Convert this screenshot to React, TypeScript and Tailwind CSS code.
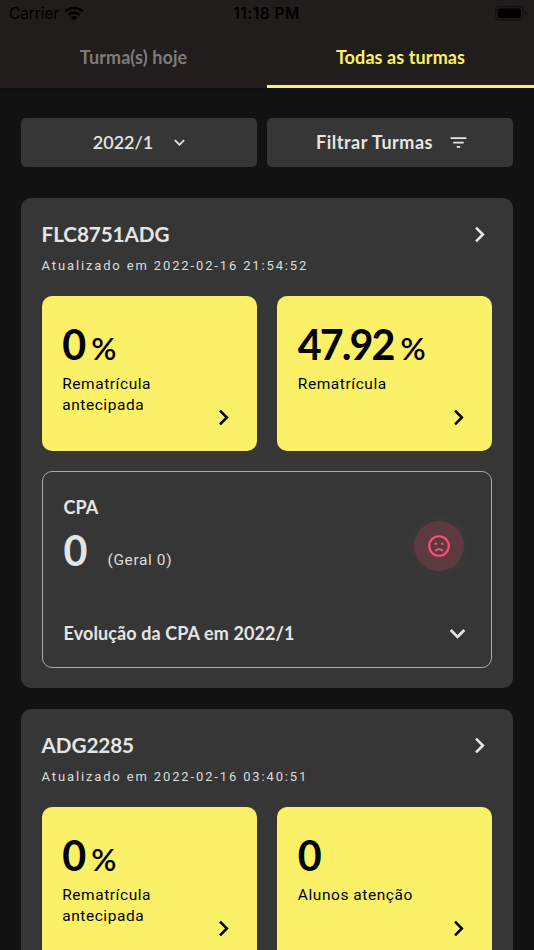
import React from "react";

const lato = "font-['Lato',sans-serif]";
const roboto = "font-['Roboto',sans-serif]";

type IconProps = { className?: string };

function ChevronRight({ className = "" }: IconProps) {
  return (
    <svg viewBox="0 0 24 24" fill="currentColor" className={`size-[31px] shrink-0 ${className}`}>
      <path d="M8.59 16.58 13.17 12 8.59 7.41 10 6l6 6-6 6-1.41-1.42Z" />
    </svg>
  );
}

function ChevronDown({ className = "" }: IconProps) {
  return (
    <svg viewBox="0 0 24 24" fill="currentColor" className={`shrink-0 ${className}`}>
      <path d="M7.41 8.58 12 13.17l4.59-4.59L18 10l-6 6-6-6 1.41-1.42Z" />
    </svg>
  );
}

function FilterIcon({ className = "" }: IconProps) {
  return (
    <svg viewBox="0 0 24 24" fill="currentColor" className={`shrink-0 ${className}`}>
      <path d="M10 18h4v-2h-4v2ZM3 6v2h18V6H3Zm3 7h12v-2H6v2Z" />
    </svg>
  );
}

function SadFace() {
  return (
    <svg viewBox="0 0 24 24" fill="currentColor" className="size-[26px]">
      <circle cx="12" cy="12" r="9" fill="none" stroke="currentColor" strokeWidth="2" />
      <circle cx="9" cy="10" r="1.15" />
      <circle cx="15" cy="10" r="1.15" />
      <path d="M12 14c1.75 0 3.29.72 4.19 1.81l-1.42 1.42C14.32 16.5 13.25 16 12 16s-2.32.5-2.77 1.23l-1.42-1.42C8.71 14.72 10.25 14 12 14Z" />
    </svg>
  );
}

function StatusBar() {
  return (
    <div className="grid h-7 grid-cols-3 items-center pl-[9px] pr-[7px] font-['Inter',sans-serif] text-[15.5px] text-black">
      <div className="flex items-center gap-[5px]">
        <span className="tracking-[-0.1px]">Carrier</span>
        <svg viewBox="0 0 20 15" className="-mt-[2px] h-[15px] w-5" fill="none" stroke="black" strokeWidth="2.7">
          <path d="M1.2 5.6a12.6 12.6 0 0 1 17.6 0" />
          <path d="M4.4 8.9a8 8 0 0 1 11.2 0" />
          <path d="M10 14.6 6.9 11.4a4.4 4.4 0 0 1 6.2 0Z" fill="black" stroke="none" />
        </svg>
      </div>
      <span className="-ml-[3px] text-center font-semibold tracking-[0.45px]">11:18 PM</span>
      <svg viewBox="0 0 32 15" className="-mt-[1.5px] h-[15px] w-8 justify-self-end">
        <rect x="0.6" y="0.6" width="27.8" height="13.3" rx="4" fill="none" stroke="#141110" strokeWidth="1.1" />
        <rect x="2.6" y="2.5" width="23.4" height="9.6" rx="2" fill="black" />
        <path d="M30 5v4.6c1-.4 1.7-1.2 1.7-2.3S31 5.4 30 5Z" fill="#141110" />
      </svg>
    </div>
  );
}

function Metric({ value, percent, label }: { value: string; percent?: boolean; label: string }) {
  return (
    <div className="flex h-[155px] flex-1 flex-col rounded-[10px] bg-[#fbf168] pl-[20.6px] pr-[18px] pt-[23px] text-black">
      <div className={`flex h-[50px] items-baseline gap-[7px] font-bold leading-[50px] ${lato}`}>
        <span className="text-[41.3px] tracking-[-2px]">{value}</span>
        {percent && <span className="text-[31px] font-semibold">%</span>}
      </div>
      <div className={`mt-[5px] h-[42px] w-[120px] text-[15.5px] leading-[20.7px] tracking-[0.55px] ${roboto}`}>
        {label}
      </div>
      <ChevronRight className="-mt-[14px] self-end" />
    </div>
  );
}

function CardHeader({ code, updated }: { code: string; updated: string }) {
  return (
    <div className="flex h-[77px] items-start justify-between">
      <div>
        <h2 className={`text-[20.7px] font-bold leading-[31px] tracking-[-0.1px] ${lato}`}>{code}</h2>
        <p className={`mt-[5.5px] text-[13px] leading-5 tracking-[1.86px] text-[#dcdcdc] ${roboto}`}>
          Atualizado em {updated}
        </p>
      </div>
      <ChevronRight className="-mr-[2.5px]" />
    </div>
  );
}

export default function App() {
  return (
    <div className={`flex h-[950px] w-[534px] flex-col overflow-hidden bg-[#121212] text-[#e5e5e5] ${lato}`}>
      <header className="h-[88px] shrink-0 bg-[#211d1c] shadow-[0_1px_4px_rgba(0,0,0,0.35)]">
        <StatusBar />
        <nav className="grid h-[60px] grid-cols-2 text-center text-[18px] font-bold leading-[58px] tracking-[0.1px]">
          <div className="h-[60px] text-[#7e7c7b]">Turma(s) hoje</div>
          <div className="h-[60px] border-b-[3px] border-[#fbf168] text-[#fbf168]">Todas as turmas</div>
        </nav>
      </header>

      <main className="flex flex-col px-[21px] pt-[30px]">
        <div className="flex gap-[10px] text-[18px] font-bold">
          <button className="flex h-[48.5px] w-[236px] items-center justify-center gap-[16px] rounded-[5px] bg-[#363636] pl-[5px]">
            <span className="font-semibold">2022/1</span>
            <ChevronDown className="size-[21px]" />
          </button>
          <button className="flex h-[48.5px] flex-1 items-center justify-center gap-[15px] rounded-[5px] bg-[#363636] pl-[5px]">
            <span className="tracking-[0.5px]">Filtrar Turmas</span>
            <FilterIcon className="size-[21px]" />
          </button>
        </div>

        <section className="mt-[31.5px] h-[490px] shrink-0 rounded-[10px] bg-[#363636] px-[20.6px] pt-[21px]">
          <CardHeader code="FLC8751ADG" updated="2022-02-16 21:54:52" />
          <div className="flex gap-[20.5px]">
            <Metric value="0" percent label="Rematrícula antecipada" />
            <Metric value="47.92" percent label="Rematrícula" />
          </div>
          <div className="mt-[20px] h-[197px] rounded-[10px] border-[1.3px] border-[#a8a8a8] px-[21px] pt-[19.5px]">
            <div className="flex h-[107px] items-center justify-between border-b border-[#333333]">
              <div className="h-full">
                <h3 className="text-[18px] font-bold leading-[30px]">CPA</h3>
                <div className="flex items-baseline gap-5">
                  <span className="text-[41.3px] font-bold leading-[56px]">0</span>
                  <span className={`relative -top-[1px] text-[15.5px] tracking-[0.6px] text-[#dcdcdc] ${roboto}`}>(Geral 0)</span>
                </div>
              </div>
              <div className="mr-[6.5px] mt-[2px] flex size-[50px] items-center justify-center rounded-full bg-[#5d3a40] text-[#ff4f76] shadow-[0_0_0_5px_rgba(63,63,63,0.3)]">
                <SadFace />
              </div>
            </div>
            <div className="flex h-[69px] items-center justify-between text-[18px] font-bold tracking-[0.1px]">
              Evolução da CPA em 2022/1
              <ChevronDown className="-mr-[3px] size-[31px]" />
            </div>
          </div>
        </section>

        <section className="mt-[21px] h-[490px] shrink-0 rounded-[10px] bg-[#363636] px-[20.6px] pt-[21px]">
          <CardHeader code="ADG2285" updated="2022-02-16 03:40:51" />
          <div className="flex gap-[20.5px]">
            <Metric value="0" percent label="Rematrícula antecipada" />
            <Metric value="0" label="Alunos atenção" />
          </div>
        </section>
      </main>
    </div>
  );
}
